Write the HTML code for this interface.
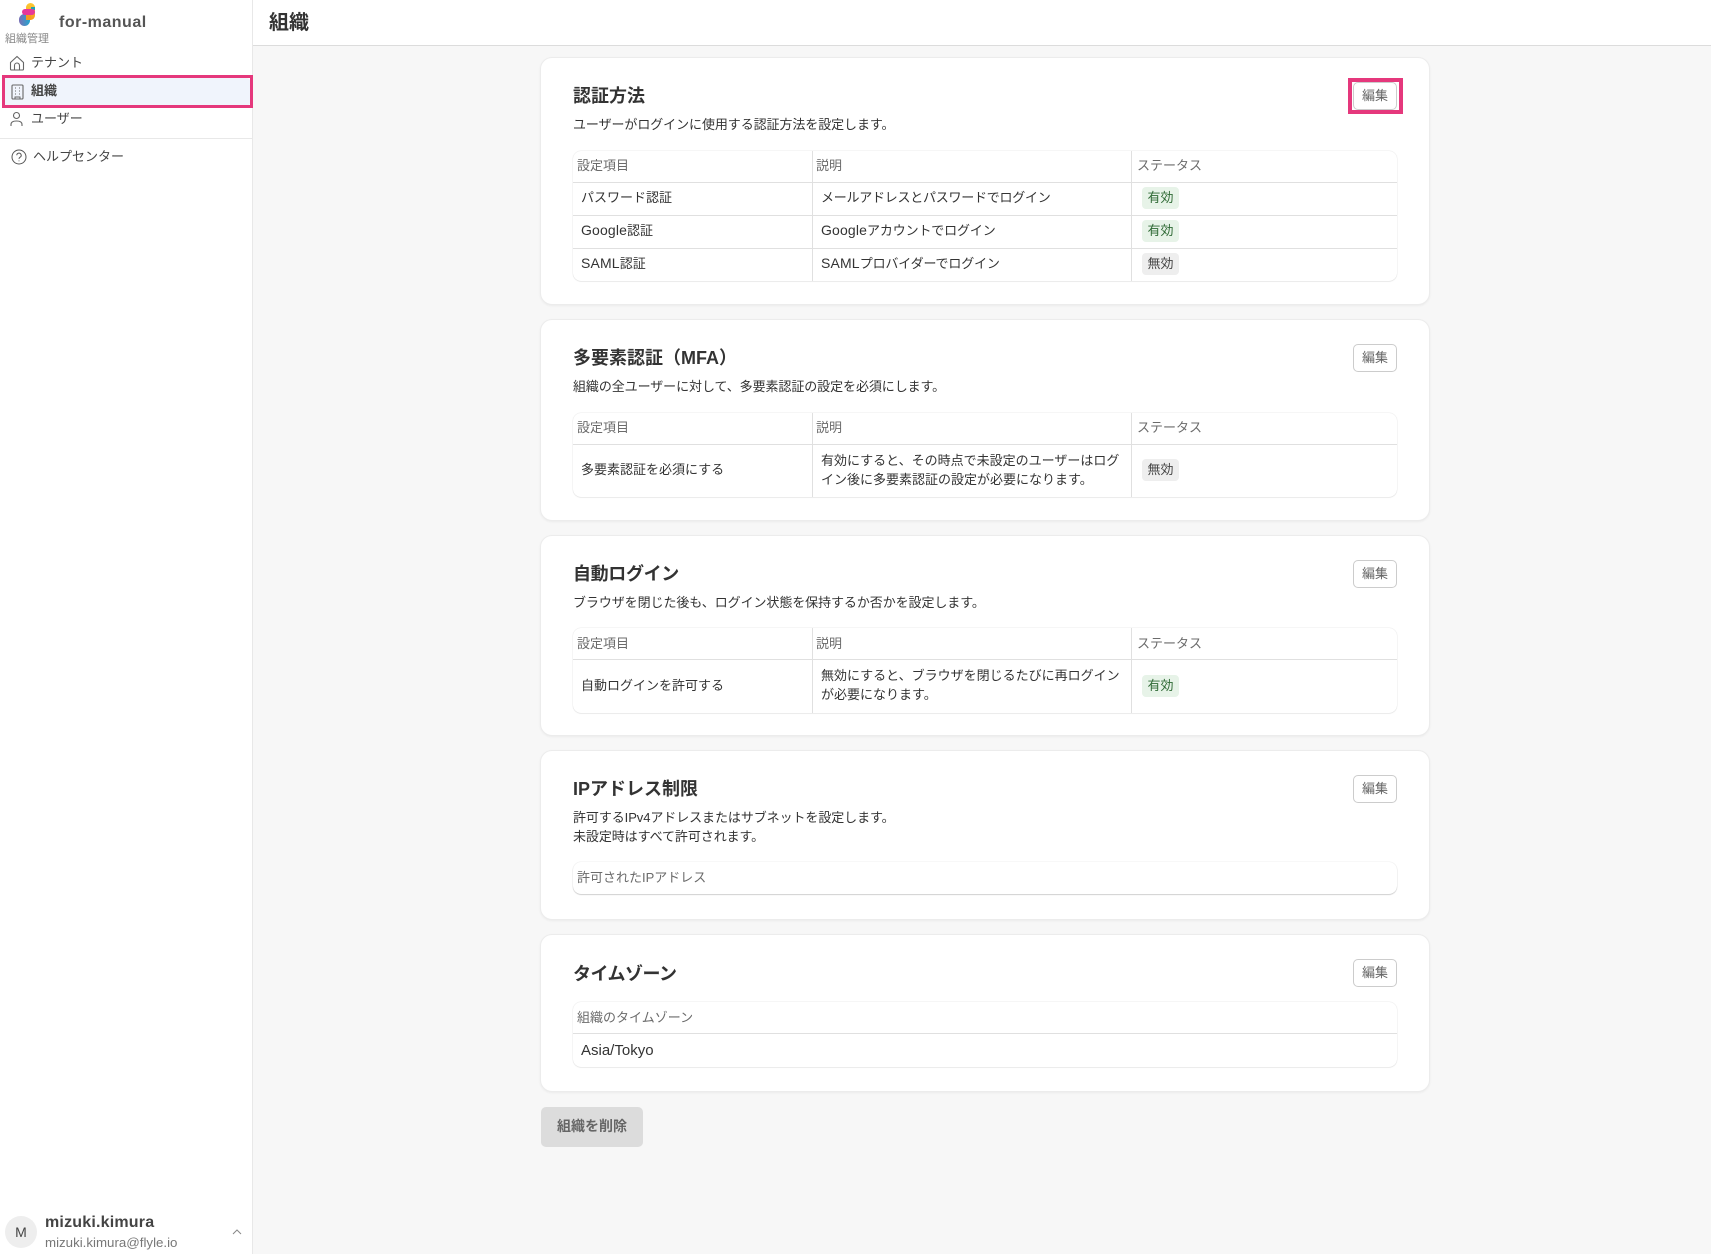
<!DOCTYPE html>
<html lang="ja"><head><meta charset="utf-8"><title>組織</title>
<style>
*{box-sizing:border-box}
html,body{margin:0;padding:0;width:1711px;height:1254px;overflow:hidden;background:#f7f7f7;font-family:"Liberation Sans","Noto Sans CJK JP",sans-serif;color:#333;font-size:13px}
.a{position:absolute;white-space:nowrap;line-height:18px}
.sb{position:absolute;left:0;top:0;width:253px;height:1254px;background:#fff;border-right:1px solid #e8e8e8}
.hd{position:absolute;left:253px;top:0;width:1458px;height:46px;background:#fff;border-bottom:1px solid #dcdcdc}
.card{position:absolute;left:540px;width:890px;background:#fff;border:1px solid #ececec;border-radius:12px;box-shadow:0 1px 2px rgba(0,0,0,.05)}
.h{position:absolute;left:32px;font-size:18px;font-weight:bold;color:#333;white-space:nowrap;line-height:26px}
.p{position:absolute;left:32px;font-size:13px;color:#333;white-space:nowrap;line-height:19px;letter-spacing:-.08px}
.b{position:absolute;left:812px;width:44px;height:28px;border:1px solid #ccc;border-radius:5px;background:#fff;color:#666;font-size:13px;text-align:center;line-height:25px}
.t{position:absolute;left:32px;width:824px;border-radius:8px;background:#fff;box-shadow:0 0 1px rgba(0,0,0,.22),0 1px 1px rgba(0,0,0,.05)}
.r{position:absolute;left:0;width:824px;border-bottom:1px solid #e0e0e0}
.r.l{border-bottom:0}
.c{position:absolute;top:0;bottom:0;display:flex;align-items:center;line-height:19px;color:#333;white-space:nowrap;padding-bottom:2px}
.c1{left:8px}.c2{left:248px;width:310px;white-space:normal}.c3{left:569px}
.th .c{color:#6b6b6b}.th .c1{left:4px}.th .c2{left:243px}.th .c3{left:564px}
.np .c{padding-bottom:0}
.tl .c{padding-bottom:3px}
.rw .c1,.rw .c2{padding-bottom:4px}
.v{position:absolute;width:1px;background:#e0e0e0;top:0;bottom:0}
.bd{display:inline-block;width:37px;height:22px;line-height:21px;border-radius:4px;text-align:center;background:#e7f3e8;color:#2f6a35}
.bd.o{background:#eee;color:#444}
.e{font-size:14px;letter-spacing:.15px}
.s{letter-spacing:-.15px}
</style></head><body>
<div class="sb"></div>
<div class="hd"></div>
<svg class="a" style="left:16px;top:0" width="24" height="28" viewBox="0 0 24 28">
<defs>
<linearGradient id="g1" x1="0" y1="0" x2="0" y2="1"><stop offset="0" stop-color="#fcc934"/><stop offset="1" stop-color="#f59a1f"/></linearGradient>
<linearGradient id="g2" x1="0" y1="0" x2="1" y2="0"><stop offset="0" stop-color="#7a6fb5"/><stop offset="1" stop-color="#22a6cf"/></linearGradient>
</defs>
<rect x="10" y="3" width="9" height="17" rx="4.5" fill="url(#g1)"/>
<rect x="15" y="7" width="4" height="3" fill="#1fa3b5"/>
<rect x="3" y="14" width="11" height="12" rx="5.5" fill="url(#g2)"/>
<rect x="10" y="15" width="5" height="5" fill="#f59a1f"/>
<rect x="6" y="9" width="13" height="6" rx="3" fill="#e6389a"/>
</svg>
<div class="a" style="left:59px;top:14px;font-size:16px;font-weight:bold;color:#555;letter-spacing:.5px">for-manual</div>
<div class="a" style="left:5px;top:30px;font-size:11px;color:#888">組織管理</div>
<svg class="a" style="left:9px;top:55px" width="16" height="16" viewBox="0 0 16 16" fill="none" stroke="#666" stroke-width="1.1"><path d="M1.5 7.5 8 1.5l6.5 6V14a1 1 0 0 1-1 1h-11a1 1 0 0 1-1-1z"/><path d="M5.500 15v-4.500a2.500 2.500 0 0 1 5 0V15"/></svg>
<div class="a" style="left:31px;top:54px;color:#444">テナント</div>
<div class="a" style="left:5px;top:78px;width:246px;height:28px;background:#f0f4fc;border-radius:0 5px 5px 0"></div>
<div class="a" style="left:2px;top:75px;width:251px;height:33px;border:3px solid #e5387c"></div>
<svg class="a" style="left:10px;top:84px" width="15" height="16" viewBox="0 0 15 16" fill="none" stroke="#666" stroke-width="1.1"><rect x="2" y="1" width="11" height="14" rx="1"/><path d="M5 4h1M9 4h1M5 7h1M9 7h1M5 10h1M9 10h1M5 15v-2h5v2" stroke-width="1"/></svg>
<div class="a" style="left:31px;top:82px;font-weight:bold;color:#444">組織</div>
<svg class="a" style="left:9px;top:111px" width="15" height="16" viewBox="0 0 15 16" fill="none" stroke="#666" stroke-width="1.1"><circle cx="7.5" cy="4.500" r="3"/><path d="M2 15v-1.500C2 11 4 10 7.500 10s5.500 1 5.500 3.500V15"/></svg>
<div class="a" style="left:31px;top:110px;color:#444">ユーザー</div>
<div class="a" style="left:0;top:138px;width:252px;height:1px;background:#e8e8e8"></div>
<svg class="a" style="left:11px;top:149px" width="16" height="16" viewBox="0 0 16 16" fill="none" stroke="#555" stroke-width="1"><circle cx="8" cy="8" r="7"/><path d="M5.800 6.300a2.200 2.200 0 1 1 3.300 1.900c-.8.500-1.100.9-1.100 1.700"/><path d="M8 11.500v.8"/></svg>
<div class="a" style="left:33px;top:148px;color:#444">ヘルプセンター</div>
<div class="a" style="left:5px;top:1216px;width:32px;height:32px;border-radius:50%;background:#eee;text-align:center;line-height:32px;font-size:14px;color:#444">M</div>
<div class="a" style="left:45px;top:1214px;font-size:16px;font-weight:bold;color:#444;letter-spacing:.2px">mizuki.kimura</div>
<div class="a" style="left:45px;top:1234px;font-size:13.3px;color:#777">mizuki.kimura@flyle.io</div>
<svg class="a" style="left:232px;top:1228px" width="10" height="8" viewBox="0 0 10 8" fill="none" stroke="#888" stroke-width="1"><path d="M1 6l4-4 4 4"/></svg>
<div class="a" style="left:269px;top:11px;font-size:20px;font-weight:bold;line-height:24px;color:#333">組織</div>

<div class="card" style="top:57px;height:248px">
<div class="h" style="top:25px">認証方法</div>
<div class="p" style="top:57px">ユーザーがログインに使用する認証方法を設定します。</div>
<div class="b" style="top:24px">編集</div>
<div class="t" style="top:93px;height:130px">
<div class="r th" style="top:0;height:32px"><div class="c c1">設定項目</div><div class="c c2">説明</div><div class="c c3">ステータス</div></div>
<div class="r rw" style="top:32px;height:33px"><div class="c c1">パスワード認証</div><div class="c c2" style="letter-spacing:-.25px">メールアドレスとパスワードでログイン</div><div class="c c3"><span class="bd">有効</span></div></div>
<div class="r rw" style="top:65px;height:33px"><div class="c c1"><span><span class="e">Google</span>認証</span></div><div class="c c2 s"><span><span class="e">Google</span>アカウントでログイン</span></div><div class="c c3"><span class="bd">有効</span></div></div>
<div class="r l rw" style="top:98px;height:32px"><div class="c c1"><span><span class="e">SAML</span>認証</span></div><div class="c c2 s"><span><span class="e">SAML</span>プロバイダーでログイン</span></div><div class="c c3"><span class="bd o">無効</span></div></div>
<div class="v" style="left:239px"></div><div class="v" style="left:558px"></div>
</div></div>

<div class="card" style="top:319px;height:202px">
<div class="h" style="top:25px">多要素認証（MFA）</div>
<div class="p" style="top:57px">組織の全ユーザーに対して、多要素認証の設定を必須にします。</div>
<div class="b" style="top:24px">編集</div>
<div class="t" style="top:93px;height:84px">
<div class="r th" style="top:0;height:32px"><div class="c c1">設定項目</div><div class="c c2">説明</div><div class="c c3">ステータス</div></div>
<div class="r l tl" style="top:32px;height:52px"><div class="c c1">多要素認証を必須にする</div><div class="c c2">有効にすると、その時点で未設定のユーザーはログイン後に多要素認証の設定が必要になります。</div><div class="c c3"><span class="bd o">無効</span></div></div>
<div class="v" style="left:239px"></div><div class="v" style="left:558px"></div>
</div></div>

<div class="card" style="top:535px;height:201px">
<div class="h s" style="top:25px;letter-spacing:-.35px">自動ログイン</div>
<div class="p" style="top:57px">ブラウザを閉じた後も、ログイン状態を保持するか否かを設定します。</div>
<div class="b" style="top:24px">編集</div>
<div class="t" style="top:92px;height:85px">
<div class="r th np" style="top:0;height:32px"><div class="c c1">設定項目</div><div class="c c2">説明</div><div class="c c3">ステータス</div></div>
<div class="r l tl" style="top:32px;height:53px"><div class="c c1" style="padding-bottom:2px">自動ログインを許可する</div><div class="c c2">無効にすると、ブラウザを閉じるたびに再ログインが必要になります。</div><div class="c c3" style="padding-bottom:1px"><span class="bd">有効</span></div></div>
<div class="v" style="left:239px"></div><div class="v" style="left:558px"></div>
</div></div>

<div class="card" style="top:750px;height:170px">
<div class="h" style="top:25px">IPアドレス制限</div>
<div class="p" style="top:57px">許可するIPv4アドレスまたはサブネットを設定します。<br>未設定時はすべて許可されます。</div>
<div class="b" style="top:24px">編集</div>
<div class="t" style="top:111px;height:32px;box-shadow:0 0 1px rgba(0,0,0,.2),0 1px 1px rgba(0,0,0,.16)"><div class="r l th np" style="top:0;height:30px"><div class="c c1">許可されたIPアドレス</div></div></div>
</div>

<div class="card" style="top:934px;height:158px">
<div class="h" style="top:26px;letter-spacing:-.55px">タイムゾーン</div>
<div class="b" style="top:24px">編集</div>
<div class="t" style="top:67px;height:65px">
<div class="r th np" style="top:0;height:32px"><div class="c c1">組織のタイムゾーン</div></div>
<div class="r l np" style="top:32px;height:33px"><div class="c c1" style="font-size:15px">Asia/Tokyo</div></div>
</div></div>

<div class="a" style="left:1348px;top:78px;width:55px;height:36px;border:4px solid #e5387c"></div>
<div class="a" style="left:541px;top:1107px;width:102px;height:40px;background:#dcdcdc;border-radius:5px;text-align:center;line-height:39px;font-weight:bold;font-size:14px;color:#666">組織を削除</div>
</body></html>
